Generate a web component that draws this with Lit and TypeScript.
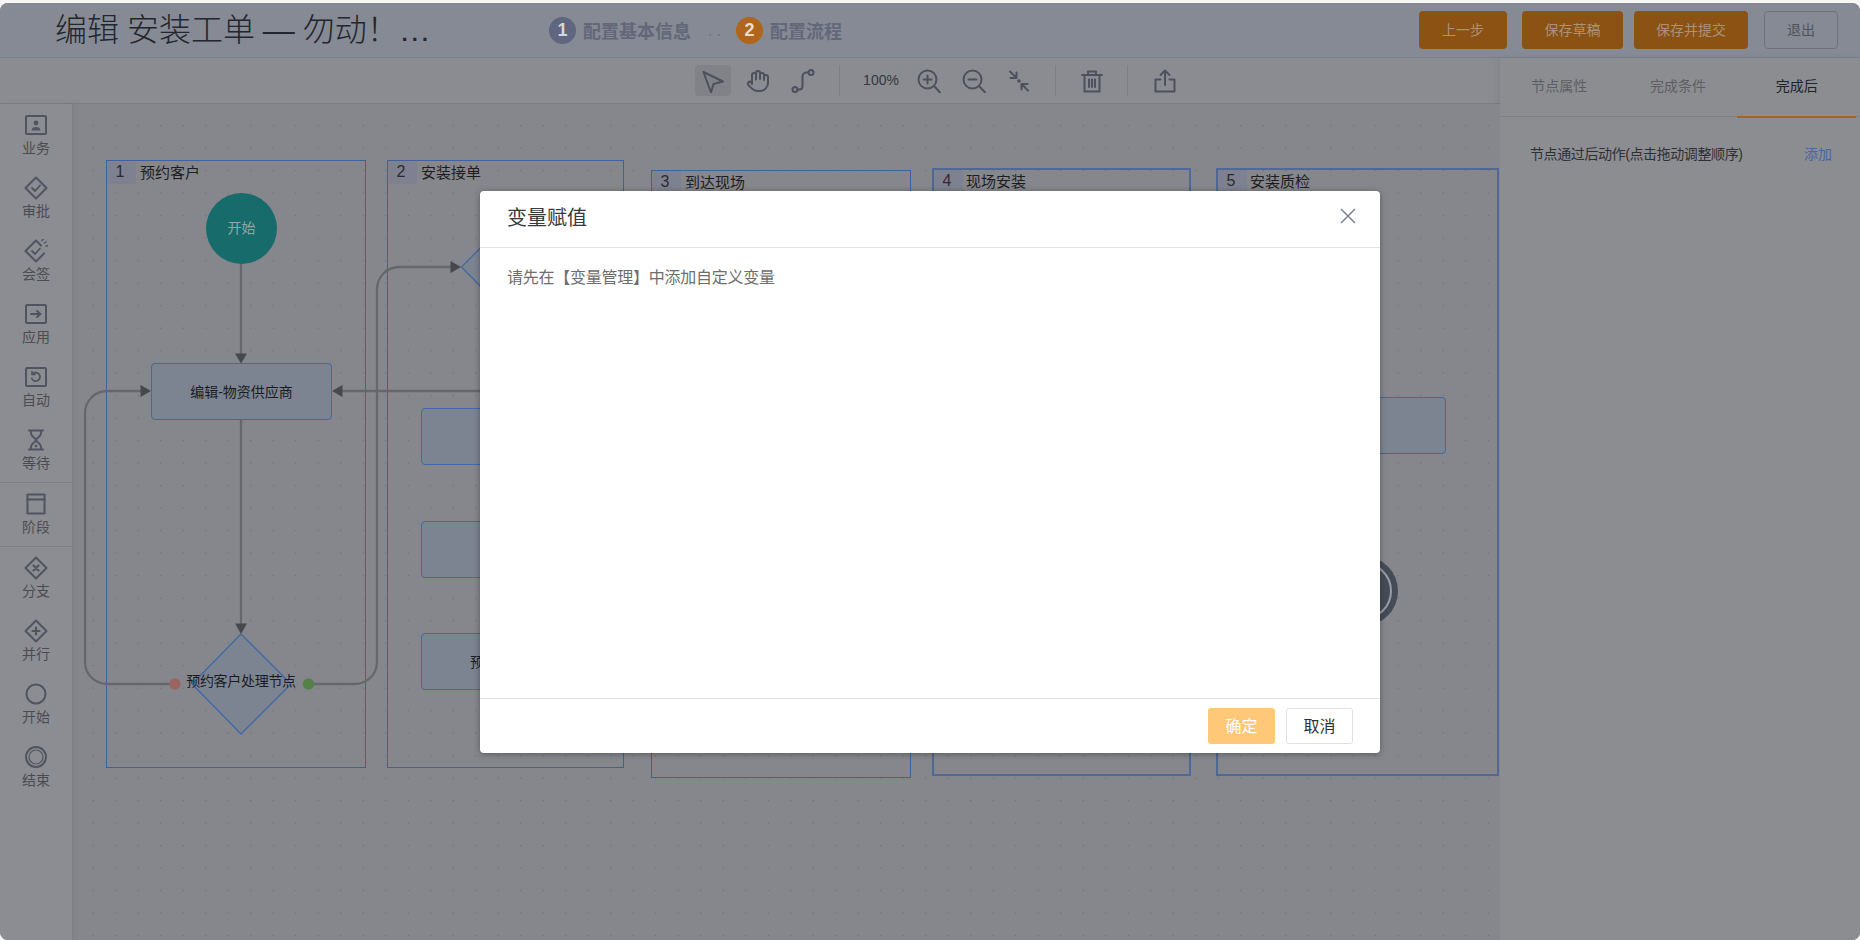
import { LitElement, html, css, svg } from "lit";
import { customElement } from "lit/decorators.js";

const ic = (body: unknown, size = 24) =>
  html`<svg class="ic" width=${size} height=${size} viewBox="0 0 24 24" fill="none" stroke="currentColor" stroke-width="2" stroke-linecap="round" stroke-linejoin="round">${body}</svg>`;

const diamond = svg`<path d="M12 1.5 22.5 12 12 22.5 1.5 12Z"/>`;

const sideGroups: { label: string; icon: unknown }[][] = [
  [
    { label: "业务", icon: svg`<rect x="2" y="3" width="20" height="18" rx="1"/><circle cx="12" cy="10" r="2.4" fill="currentColor" stroke="none"/><path d="M7.5 17.5c0-2.6 2-3.6 4.5-3.6s4.5 1 4.5 3.6Z" fill="currentColor" stroke="none"/>` },
    { label: "审批", icon: svg`${diamond}<path d="M8 12l3 3 5-5.5" stroke-width="1.8"/>` },
    { label: "会签", icon: svg`<path d="M17 6.500 12 1.500 1.500 12 12 22.500 20 14.500"/><path d="M8 12l3 3 5-5.500" stroke-width="1.800"/><path d="M18 1.500l1-1.200M20.500 4l1.500-1M22 7l1.500-.3" stroke-width="1.500"/>` },
    { label: "应用", icon: svg`<rect x="2" y="3" width="20" height="18" rx="1"/><path d="M7 12h9M13 9l3.500 3-3.500 3"/>` },
    { label: "自动", icon: svg`<rect x="2" y="3" width="20" height="18" rx="1"/><path d="M9 8.500a4.300 4.300 0 1 1-1.200 5" stroke-width="1.800"/><path d="M8 6.500v3h3" stroke-width="1.600"/>` },
    { label: "等待", icon: svg`<path d="M5 2.500h14M5 21.500h14M7 2.500v3c0 3 5 4.500 5 6.500s-5 3.500-5 6.500v3M17 2.500v3c0 3-5 4.500-5 6.500s5 3.500 5 6.500v3"/><circle cx="12" cy="18" r="1.300" fill="currentColor" stroke="none"/>` },
  ],
  [{ label: "阶段", icon: svg`<rect x="3.500" y="2.500" width="17" height="19"/><path d="M3.500 7.500h17"/>` }],
  [
    { label: "分支", icon: svg`${diamond}<path d="M9.500 9.500l5 5M14.500 9.500l-5 5" stroke-width="2.200"/>` },
    { label: "并行", icon: svg`${diamond}<path d="M12 8.500v7M8.500 12h7" stroke-width="2.200"/>` },
    { label: "开始", icon: svg`<circle cx="12" cy="12" r="9.500"/>` },
    { label: "结束", icon: svg`<circle cx="12" cy="12" r="10"/><circle cx="12" cy="12" r="7" stroke-width="1.200"/>` },
  ],
];

const tools = {
  pointer: svg`<path d="M2.500 3 22 12.500l-9.500 2.500L10 23.500Z"/>`,
  hand: svg`<path d="M18 11V6a2 2 0 0 0-4 0M14 10V4a2 2 0 0 0-4 0v2M10 10.500V6a2 2 0 0 0-4 0v8M18 8a2 2 0 1 1 4 0v6a8 8 0 0 1-8 8h-2c-2.800 0-4.500-.86-5.990-2.340l-3.600-3.600a2 2 0 0 1 2.830-2.820L6 15"/>`,
  route: svg`<circle cx="4" cy="20.500" r="2.500"/><circle cx="20" cy="3.500" r="2.500"/><path d="M6.500 20.500h2a3 3 0 0 0 3-3V7.500a4 4 0 0 1 4-4h2"/>`,
  zoomIn: svg`<circle cx="10.500" cy="10.500" r="9"/><path d="M17 17l6 6.500M10.500 6.500v8M6.500 10.500h8"/>`,
  zoomOut: svg`<circle cx="10.500" cy="10.500" r="9"/><path d="M17 17l6 6.500M6.500 10.500h8"/>`,
  shrink: svg`<path d="M3 2.500 9 8.500M9.500 3.500v5.500H3.500M21 21.500l-6-6M14.500 20.500V15h6"/><circle cx="12" cy="12" r=".8" fill="currentColor"/>`,
  trash: svg`<path d="M2 6h20M8 6V2.500h8V6M4.500 6v16.500h15V6M9 10.500V18M12 10.500V18M15 10.500V18"/>`,
  share: svg`<path d="M7.500 10.500H2.500V22.500h19V10.500h-5M12 16V1.500M7.500 6 12 1.500 16.500 6"/>`,
};

const lanes = [
  { n: 1, t: "预约客户", x: 106, y: 160, w: 260, h: 608, cls: "" },
  { n: 2, t: "安装接单", x: 387, y: 160, w: 237, h: 608, cls: "" },
  { n: 3, t: "到达现场", x: 651, y: 170, w: 260, h: 608, cls: "mid" },
  { n: 4, t: "现场安装", x: 932, y: 168, w: 259, h: 608, cls: "thick" },
  { n: 5, t: "安装质检", x: 1216, y: 168, w: 283, h: 608, cls: "thick" },
];

const rects = [
  { x: 151, y: 363, t: "编辑-物资供应商", cls: "" },
  { x: 421, y: 408, t: "", cls: "" },
  { x: 421, y: 521, t: "", cls: "" },
  { x: 421, y: 633, t: "预", cls: "lead" },
  { x: 1265, y: 397, t: "", cls: "" },
];

const arrow = (p: string) => svg`<polygon class="head" points=${p}/>`;

@customElement("flow-canvas")
class FlowCanvas extends LitElement {
  static styles = css`
    * { box-sizing: border-box; }
    :host { display: block; position: relative; flex: 1; overflow: hidden; background-color: #86878c;
      background-image: radial-gradient(circle, #66676c 0.55px, transparent 0.95px);
      background-size: 22.5px 22.5px; background-position: 9px 10.4px; }
    .layer { position: absolute; left: -73px; top: -104px; width: 1860px; height: 940px; }
    .lane { position: absolute; border: 1px solid #3d62a0; }
    .lane.mid { border-width: 1.500px; }
    .lane.thick { border: 2px solid #4f6896; }
    .lane-head { display: flex; align-items: center; height: 23px; font-size: 15px; color: #1e1e21; }
    .lane-head .txt { margin-top: -2px; }
    .lane.thick .txt { margin-top: -3px; margin-left: -1px; }
    .num { width: 29px; height: 23px; padding: 0 3px 2px 0; display: flex; align-items: center; justify-content: center; background: #7e8190; font-size: 16px; color: #2b2b2e; margin-right: 4px; }
    svg.links { position: absolute; left: 0; top: 0; }
    .line { fill: none; stroke: #66676c; stroke-width: 2.300; }
    .head { fill: #47484d; }
    .shape { fill: #7d8491; stroke: #3f69a8; stroke-width: 1.300; stroke-linejoin: round; }
    .node { position: absolute; width: 181px; height: 57px; padding-bottom: 2px; border: 1.300px solid #3f69a8; border-radius: 4px; background: #7d8491; display: flex; align-items: center; justify-content: center; font-size: 14px; color: #1c1c1f; }
    .node.lead { justify-content: flex-start; padding-left: 48px; }
    .start { position: absolute; left: 206px; top: 193px; width: 71px; height: 71px; padding-bottom: 4px; border-radius: 50%; background: #176b6b; color: #8fa8a6; font-size: 14px; display: flex; align-items: center; justify-content: center; }
    .end { position: absolute; left: 1328px; top: 556px; width: 70px; height: 70px; border-radius: 50%; background: #454c58; display: flex; align-items: center; justify-content: center; }
    .end i { display: block; width: 58px; height: 58px; border-radius: 50%; border: 2px solid #9a9ca3; }
    .dlabel { position: absolute; left: 181px; top: 671px; width: 120px; text-align: center; font-size: 14px; letter-spacing: -0.3px; line-height: 20px; color: #1c1c1f; }
  `;
  render() {
    return html`<div class="layer">
      ${lanes.map((l) => html`<div class="lane ${l.cls}" style="left:${l.x}px;top:${l.y}px;width:${l.w}px;height:${l.h}px">
        <div class="lane-head"><span class="num">${l.n}</span><span class="txt">${l.t}</span></div></div>`)}
      <svg class="links" width="1860" height="940">
        <path class="line" d="M241 264V356"/>${arrow("241,363.500 235,353.500 247,353.500")}
        <path class="line" d="M241 420V626"/>${arrow("241,634 235,623.500 247,623.500")}
        <path class="line" d="M175 684H107A22 22 0 0 1 85 662V413A22 22 0 0 1 107 391H143"/>${arrow("151,391 140.500,385 140.500,397")}
        <path class="line" d="M308 684H355A22 22 0 0 0 377 662V289A22 22 0 0 1 399 267H453"/>${arrow("461,267 450.500,261 450.500,273")}
        <path class="line" d="M480 391H340"/>${arrow("332,391 342.500,385 342.500,397")}
        <polygon class="shape" points="241,634 291,684 241,734 192,684"/>
        <polygon class="shape" points="461.500,267 511,217 561,267 511,317"/>
        <circle cx="175" cy="684" r="5.700" fill="#9a6560"/>
        <circle cx="308.500" cy="684" r="5.700" fill="#558048"/>
      </svg>
      ${rects.map((r) => html`<div class="node ${r.cls}" style="left:${r.x}px;top:${r.y}px">${r.t}</div>`)}
      <div class="start">开始</div>
      <div class="end"><i></i></div>
      <div class="dlabel">预约客户处理节点</div>
    </div>`;
  }
}

@customElement("app-root")
class AppRoot extends LitElement {
  static styles = css`
    :host { display: block; height: 940px; background: #f6f6f7; font-family: "Liberation Sans", "Noto Sans CJK SC", sans-serif; }
    * { box-sizing: border-box; }
    .outer { height: 940px; padding-top: 3px; }
    .window { position: relative; height: 937px; border-radius: 8px; overflow: hidden; display: flex; flex-direction: column; background: #8c8d92; }
    header { height: 55px; flex: none; display: flex; align-items: center; padding-left: 55px; background: #868a94; border-bottom: 1px solid #7b7f8c; }
    .title { width: 378px; flex: none; font-size: 32px; line-height: 54px; word-spacing: -1px; color: #23262e; white-space: nowrap; font-weight: 300; }
    .steps { display: flex; align-items: center; margin-left: 116px; }
    .circle { width: 27px; height: 27px; border-radius: 50%; background: #5e6680; color: #d4d6dc; font-weight: 700; font-size: 18px; display: flex; align-items: center; justify-content: center; }
    .circle.on { background: #b0651a; color: #e8dccd; }
    .slabel { font-size: 18px; font-weight: 700; color: #62677a; margin-left: 7px; }
    .sdots { width: 45px; text-align: center; font-size: 16px; color: #6f7380; letter-spacing: 4px; padding-left: 6px; padding-top: 2px; }
    .btns { margin-left: auto; padding-right: 22px; display: flex; align-items: center; }
    .btn { height: 38px; padding-bottom: 2px; border-radius: 4px; font-size: 14px; display: flex; align-items: center; justify-content: center; background: #8b5213; color: #a8927a; }
    .b1 { width: 88px; } .b2 { width: 101px; margin-left: 15px; } .b3 { width: 114px; margin-left: 11px; }
    .b4 { width: 74px; margin-left: 16px; background: none; border: 1px solid #6f727c; color: #505359; }
    .main { flex: 1; display: flex; min-height: 0; }
    .left { flex: 1; display: flex; flex-direction: column; min-width: 0; }
    .toolbar { height: 46px; flex: none; display: flex; align-items: center; gap: 9px; padding-left: 695px; background: #8b8c91; border-bottom: 1px solid #7c7d83; color: #4c515d; }
    .tool { width: 36px; height: 31px; border-radius: 4px; display: flex; align-items: center; justify-content: center; }
    .tool.sel { background: #818287; }
    .sep { width: 1px; height: 31px; background: #7e7f84; margin: 0 8px 0 9px; }
    .sep.mid { margin: 0 9px; }
    .sep.wide { margin: 0 10px 0 8px; }
    .pct { width: 45px; padding: 0 0 2px 3px; text-align: center; font-size: 14px; color: #35363b; }
    .work { flex: 1; display: flex; min-height: 0; }
    .side { width: 73px; flex: none; background: #8c8d92; border-right: 1px solid #7e7f84; box-shadow: 2px 0 6px rgba(0,0,0,.04); z-index: 1; }
    .group + .group { border-top: 1px solid #7e7f84; }
    .sitem { height: 63px; padding-top: 9px; display: flex; flex-direction: column; align-items: center; color: #4f5460; }
    .sitem span { font-size: 14px; line-height: 22px; color: #4b4c51; }
    .panel { width: 360px; flex: none; background: #8c8d91; box-shadow: -2px 0 6px rgba(0,0,0,.06); }
    .tabs { display: flex; height: 59px; padding-right: 4px; border-bottom: 1px solid #7f8085; }
    .tab { flex: 1; display: flex; align-items: center; justify-content: center; padding-bottom: 4px; font-size: 14px; color: #5d5e63; position: relative; }
    .tab.on { color: #232325; }
    .tab.on::after { content: ""; position: absolute; left: 0; right: 0; bottom: -2px; height: 2px; background: #a9631c; }
    .prow { display: flex; justify-content: space-between; padding: 27px 28px 0 30px; font-size: 14px; line-height: 20px; color: #2f3034; }
    .prow .desc { letter-spacing: -0.4px; }
    .link { color: #44689f; }
    .scrim { position: absolute; inset: 0; display: flex; justify-content: center; padding-top: 188px; }
    .modal { width: 900px; height: 562px; background: #fff; border-radius: 4px; box-shadow: 0 1px 6px rgba(0,0,0,.35); display: flex; flex-direction: column; }
    .mhead { height: 57px; flex: none; display: flex; align-items: center; justify-content: space-between; padding: 0 23px 6px 27px; border-bottom: 1px solid #e1e2e6; font-size: 20px; color: #38393c; }
    .mhead svg { color: #7b8294; display: block; }
    .mbody { flex: 1; padding: 18px 27px; font-size: 16px; letter-spacing: -0.25px; line-height: 24px; color: #6e6e6e; }
    .mfoot { height: 55px; flex: none; display: flex; align-items: flex-start; justify-content: flex-end; gap: 11px; padding: 9px 27px 0 0; border-top: 1px solid #e1e2e6; }
    .mbtn { width: 67px; height: 36px; padding-bottom: 2px; border-radius: 3px; font-size: 16px; display: flex; align-items: center; justify-content: center; }
    .ok { background: #ffc878; color: #fff; }
    .no { background: #fff; border: 1px solid #dfe1e7; color: #303133; }
  `;
  render() {
    return html`<div class="outer"><div class="window">
      <header>
        <div class="title">编辑 安装工单 — 勿动！…</div>
        <div class="steps">
          <span class="circle">1</span><span class="slabel">配置基本信息</span>
          <span class="sdots">..</span>
          <span class="circle on">2</span><span class="slabel">配置流程</span>
        </div>
        <div class="btns">
          <div class="btn b1">上一步</div><div class="btn b2">保存草稿</div><div class="btn b3">保存并提交</div><div class="btn b4">退出</div>
        </div>
      </header>
      <div class="main">
        <div class="left">
          <div class="toolbar">
            <div class="tool sel">${ic(tools.pointer)}</div>
            <div class="tool">${ic(tools.hand)}</div>
            <div class="tool">${ic(tools.route)}</div>
            <div class="sep"></div>
            <div class="pct">100%</div>
            <div class="tool">${ic(tools.zoomIn)}</div>
            <div class="tool">${ic(tools.zoomOut)}</div>
            <div class="tool">${ic(tools.shrink)}</div>
            <div class="sep mid"></div>
            <div class="tool">${ic(tools.trash)}</div>
            <div class="sep wide"></div>
            <div class="tool">${ic(tools.share)}</div>
          </div>
          <div class="work">
            <aside class="side">
              ${sideGroups.map((g) => html`<div class="group">${g.map((i) => html`<div class="sitem">${ic(i.icon)}<span>${i.label}</span></div>`)}</div>`)}
            </aside>
            <flow-canvas></flow-canvas>
          </div>
        </div>
        <div class="panel">
          <div class="tabs">
            <div class="tab">节点属性</div><div class="tab">完成条件</div><div class="tab on">完成后</div>
          </div>
          <div class="prow"><span class="desc">节点通过后动作(点击拖动调整顺序)</span><span class="link">添加</span></div>
        </div>
      </div>
      <div class="scrim">
        <div class="modal">
          <div class="mhead"><span>变量赋值</span>
            <svg width="18" height="18" viewBox="0 0 18 18" fill="none" stroke="currentColor" stroke-width="1.500"><path d="M2 2l14 14M16 2 2 16"/></svg>
          </div>
          <div class="mbody">请先在【变量管理】中添加自定义变量</div>
          <div class="mfoot"><div class="mbtn ok">确定</div><div class="mbtn no">取消</div></div>
        </div>
      </div>
    </div></div>`;
  }
}
